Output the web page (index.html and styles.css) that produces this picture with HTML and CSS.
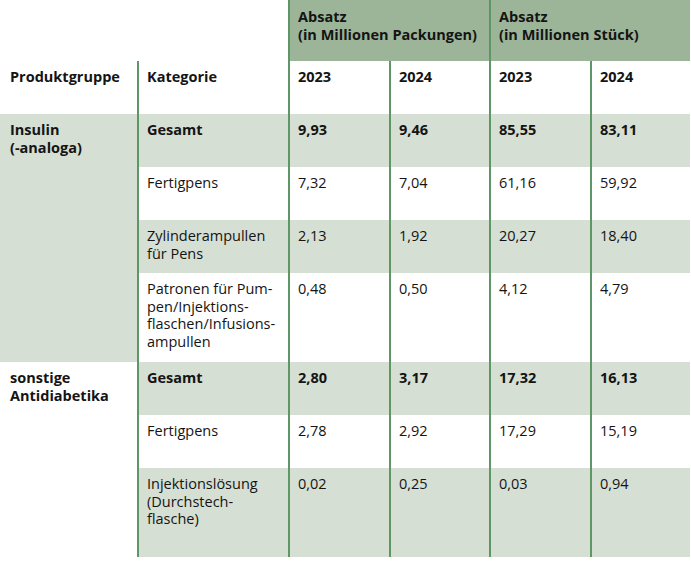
FILE: index.html
```html
<!DOCTYPE html>
<html lang="de">
<head>
<meta charset="utf-8">
<link rel="stylesheet" href="styles.css">
</head>
<body>
<table class="sales">
  <colgroup>
    <col class="c-group">
    <col class="c-cat">
    <col class="c-num">
    <col class="c-num2">
    <col class="c-num">
    <col class="c-num2">
  </colgroup>
  <thead>
    <tr class="h1">
      <th colspan="2" class="blank"></th>
      <th colspan="2" class="band line">Absatz<br>(in Millionen Packungen)</th>
      <th colspan="2" class="band line">Absatz<br>(in Millionen Stück)</th>
    </tr>
    <tr class="h2">
      <th class="first">Produktgruppe</th>
      <th class="line">Kategorie</th>
      <th class="line">2023</th>
      <th class="line">2024</th>
      <th class="line">2023</th>
      <th class="line">2024</th>
    </tr>
  </thead>
  <tbody>
    <tr class="r alt">
      <td rowspan="4" class="first group shaded">Insulin<br>(-analoga)</td>
      <td class="line strong">Gesamt</td>
      <td class="line strong">9,93</td>
      <td class="line strong">9,46</td>
      <td class="line strong">85,55</td>
      <td class="line strong">83,11</td>
    </tr>
    <tr class="r">
      <td class="line">Fertigpens</td>
      <td class="line">7,32</td>
      <td class="line">7,04</td>
      <td class="line">61,16</td>
      <td class="line">59,92</td>
    </tr>
    <tr class="r alt">
      <td class="line">Zylinderampullen<br>für Pens</td>
      <td class="line">2,13</td>
      <td class="line">1,92</td>
      <td class="line">20,27</td>
      <td class="line">18,40</td>
    </tr>
    <tr class="r tall">
      <td class="line">Patronen für Pum-<br>pen/Injektions-<br>flaschen/Infusions-<br>ampullen</td>
      <td class="line">0,48</td>
      <td class="line">0,50</td>
      <td class="line">4,12</td>
      <td class="line">4,79</td>
    </tr>
    <tr class="r alt">
      <td rowspan="3" class="first group">sonstige<br>Antidiabetika</td>
      <td class="line strong">Gesamt</td>
      <td class="line strong">2,80</td>
      <td class="line strong">3,17</td>
      <td class="line strong">17,32</td>
      <td class="line strong">16,13</td>
    </tr>
    <tr class="r">
      <td class="line">Fertigpens</td>
      <td class="line">2,78</td>
      <td class="line">2,92</td>
      <td class="line">17,29</td>
      <td class="line">15,19</td>
    </tr>
    <tr class="r alt tall">
      <td class="line">Injektionslösung<br>(Durchstech-<br>flasche)</td>
      <td class="line">0,02</td>
      <td class="line">0,25</td>
      <td class="line">0,03</td>
      <td class="line">0,94</td>
    </tr>
  </tbody>
</table>
</body>
</html>
```
FILE: styles.css
```css
html, body {
  margin: 0;
  padding: 0;
  background: #ffffff;
}

body {
  font-family: "Open Sans", "Noto Sans", sans-serif;
  font-size: 14.5px;
  line-height: 17.5px;
  color: #141414;
}

.sales {
  width: 690px;
  table-layout: fixed;
  border-collapse: separate;
  border-spacing: 0;
}

.c-group { width: 137px; }
.c-cat { width: 151px; }
.c-num { width: 101px; }
.c-num2 { width: 100px; }

.sales th,
.sales td {
  box-sizing: border-box;
  vertical-align: top;
  text-align: left;
  padding: 7px 6px 0 8px;
  font-weight: 400;
}

.sales th {
  font-weight: 700;
}

.sales .line {
  border-left: 2px solid #5f9666;
}

.sales .first {
  padding-left: 10px;
}

.h1 { height: 61px; }
.h1 th { padding-top: 8px; }
.h2 { height: 53px; }
.h2 th { padding-top: 7px; }

.band {
  background: #9cb498;
}

.r { height: 53px; }
.r.tall { height: 89px; }

.alt td {
  background: #d6dfd3;
}

.alt td.group {
  background: #ffffff;
}

.sales td.group.shaded {
  background: #d6dfd3;
}

.sales .group,
.sales .strong {
  font-weight: 700;
}
```
